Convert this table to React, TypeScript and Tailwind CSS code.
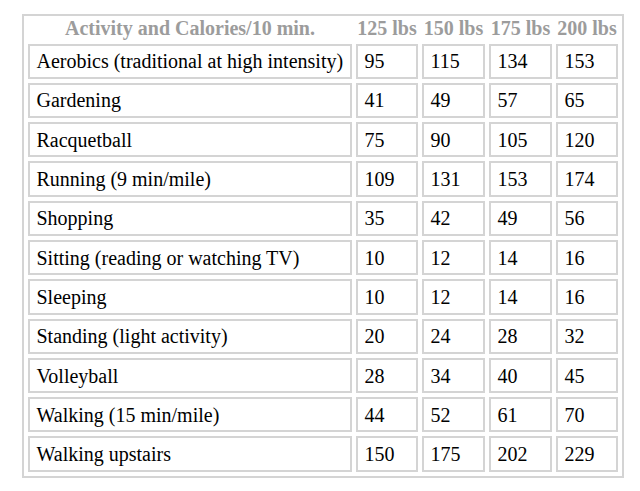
import React from "react";

const rows: [string, number, number, number, number][] = [
  ["Aerobics (traditional at high intensity)", 95, 115, 134, 153],
  ["Gardening", 41, 49, 57, 65],
  ["Racquetball", 75, 90, 105, 120],
  ["Running (9 min/mile)", 109, 131, 153, 174],
  ["Shopping", 35, 42, 49, 56],
  ["Sitting (reading or watching TV)", 10, 12, 14, 16],
  ["Sleeping", 10, 12, 14, 16],
  ["Standing (light activity)", 20, 24, 28, 32],
  ["Volleyball", 28, 34, 40, 45],
  ["Walking (15 min/mile)", 44, 52, 61, 70],
  ["Walking upstairs", 150, 175, 202, 229],
];

const headers = ["125 lbs", "150 lbs", "175 lbs", "200 lbs"];
const widths = ["w-[62px]", "w-[63px]", "w-[63px]", "w-[62px]"];

export default function App() {
  return (
    <div className="min-h-screen bg-white pt-[14px] pl-[22px] font-['Liberation_Serif','Times_New_Roman',serif]">
      <table className="w-[602px] table-fixed border-separate border-spacing-x-[4px] border-spacing-y-[4px] border-2 border-[#d4d4d4] text-[20px]">
        <thead>
          <tr>
            <th className="w-[324px] h-[19.5px] p-0 text-center align-top font-bold leading-[16px] text-[#9c9c9c] whitespace-nowrap">
              Activity and Calories/10 min.
            </th>
            {headers.map((h, i) => (
              <th
                key={h}
                className={`${widths[i]} h-[19.5px] p-0 text-center align-top font-bold leading-[16px] text-[#9c9c9c] whitespace-nowrap`}
              >
                {h}
              </th>
            ))}
          </tr>
        </thead>
        <tbody>
          {rows.map(([name, ...vals]) => (
            <tr key={name}>
              <td className="h-[35.3px] border-2 border-[#d4d4d4] py-0 pl-[6.5px] pr-0 text-left align-middle leading-[22px] text-black whitespace-nowrap">
                {name}
              </td>
              {vals.map((v, i) => (
                <td
                  key={i}
                  className="h-[35.3px] border-2 border-[#d4d4d4] py-0 pl-[6.5px] pr-0 text-left align-middle leading-[22px] text-black"
                >
                  {v}
                </td>
              ))}
            </tr>
          ))}
        </tbody>
      </table>
    </div>
  );
}
